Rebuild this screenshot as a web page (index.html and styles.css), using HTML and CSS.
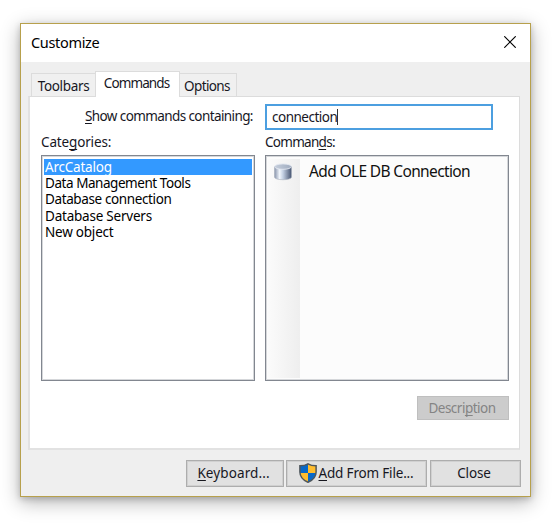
FILE: index.html
```html
<!DOCTYPE html>
<html lang="en">
<head>
<meta charset="utf-8">
<title>Customize</title>
<link rel="stylesheet" href="styles.css">
</head>
<body>
<main class="window">
  <header class="titlebar">
    <h1 class="title">Customize</h1>
    <svg class="close-icon" width="12" height="12" viewBox="0 0 12 12"><path d="M.3.3 11.7 11.7M11.7.3.3 11.7" stroke="#000" stroke-width="1.15"/></svg>
  </header>
  <nav class="tabs">
    <div class="tab tab-toolbars"><span>Toolbars</span></div>
    <div class="tab tab-commands active"><span>Commands</span></div>
    <div class="tab tab-options"><span>Options</span></div>
  </nav>
  <section class="panel">
    <div class="search">
      <label class="search-label"><u>S</u>how commands containing:</label>
      <div class="search-input"><span class="query">connection</span><i class="caret"></i></div>
    </div>
    <div class="columns">
      <div class="column categories">
        <div class="label">Cate<u>g</u>ories:</div>
        <ul class="list">
          <li class="selected"><span>ArcCatalog</span></li>
          <li><span class="management">Data Management Tools</span></li>
          <li><span class="connection">Database connection</span></li>
          <li><span class="servers">Database Servers</span></li>
          <li><span>New object</span></li>
        </ul>
      </div>
      <div class="column commands">
        <div class="label">Comman<u>d</u>s:</div>
        <div class="list command-list">
          <div class="gutter">
            <svg width="20" height="18" viewBox="0 0 20 18">
              <defs><linearGradient id="side"><stop offset="0" stop-color="#8793ab"/><stop offset=".3" stop-color="#f1f6fc"/><stop offset=".5" stop-color="#c3d0e3"/><stop offset="1" stop-color="#465470"/></linearGradient>
              <linearGradient id="lid"><stop offset="0" stop-color="#c5cedc"/><stop offset="1" stop-color="#a0acbf"/></linearGradient></defs>
              <path d="M1.500 3.600v10.500c0 3.500 17 3.500 17 0V3.600z" fill="url(#side)" stroke="#a6afbc" stroke-width=".6"/>
              <ellipse cx="10" cy="3.600" rx="8.400" ry="2.700" fill="url(#lid)" stroke="#e3e8f0" stroke-width=".9"/>
            </svg>
          </div>
          <div class="command">Add OLE DB Connection</div>
        </div>
      </div>
    </div>
    <button class="button description" disabled><span>Descri<u>p</u>tion</span></button>
  </section>
  <footer class="footer">
    <button class="button keyboard"><span><u>K</u>eyboard...</span></button>
    <button class="button add">
      <svg class="shield" width="18" height="20" viewBox="0 0 18 20">
        <defs><clipPath id="shape"><path d="M9 .8c2 1.300 4.800 2 8.100 2v6.200c0 5-3.300 8.200-8.100 10.300C4.200 17.200.900 14 .900 9V2.800c3.300 0 6.100-.7 8.100-2z"/></clipPath></defs>
        <g clip-path="url(#shape)"><path d="M0 0h9v10H0zM9 10h9v10H9z" fill="#0868c8"/><path d="M9 0h9v10H9zM0 10h9v10H0z" fill="#ffbd2e"/></g>
        <path d="M9 .8c2 1.300 4.800 2 8.100 2v6.200c0 5-3.300 8.200-8.100 10.300C4.200 17.200.900 14 .900 9V2.800c3.300 0 6.100-.7 8.100-2z" fill="none" stroke="#50575c" stroke-width="1.500"/>
      </svg><span><u>A</u>dd From File...</span>
    </button>
    <button class="button close"><span>Close</span></button>
  </footer>
</main>
</body>
</html>
```
FILE: styles.css
```css
* { box-sizing: border-box; }
body { margin: 0; width: 557px; height: 527px; padding: 23px 0 0 20px; overflow: hidden; background: #fff; color: #17171f; font: 13.5px/16px "Noto Sans", "Open Sans", sans-serif; }
u { text-decoration-thickness: 1px; text-underline-offset: 2px; text-decoration-skip-ink: none; }
span, .label, .command, .search-label { white-space: nowrap; }
.window { width: 511px; height: 474px; border: 1px solid #b7a04c; background: #efefef; box-shadow: 0 5px 18px rgba(0,0,0,.30), 0 2px 6px rgba(0,0,0,.18); }
.titlebar { height: 38px; padding: 0 14px 0 10px; background: #fff; display: flex; align-items: center; justify-content: space-between; }
.title { margin: -2px 0 0; color: #000; font-size: 14.5px; font-weight: 400; line-height: 20px; letter-spacing: -.33px; }
.close-icon { display: block; margin-top: -2px; }
.tabs { height: 34px; padding: 9px 0 0 10px; display: flex; align-items: flex-end; }
.tab { height: 23px; border: 1px solid #dcdcdc; border-bottom: 0; background: #f0f0f0; display: flex; align-items: center; justify-content: center; padding-top: 2px; }
.tab-toolbars { width: 64px; border-right: 0; letter-spacing: -.35px; }
.tab-commands { width: 85px; letter-spacing: -.9px; }
.tab-options { width: 57px; border-left: 0; padding-right: 2px; letter-spacing: -.6px; }
.tab.active { height: 26px; margin-bottom: -1px; padding: 0 2px 3px 0; background: #fff; position: relative; }
.panel { width: 492px; height: 354px; margin-left: 7px; padding: 7px 10px 0 11px; border: 1px solid #dcdcdc; border-left: 2px solid #e2e2e2; border-bottom: 2px solid #e2e2e2; background: #fff; }
.search { height: 26px; padding-left: 44px; display: flex; align-items: center; }
.search-label { width: 180px; margin-top: -2px; letter-spacing: -.6px; }
.search-input { width: 228px; height: 26px; padding: 0 5px; border: 2px solid #4c9fe0; display: flex; align-items: center; }
.query { letter-spacing: -.5px; }
.caret { width: 1px; height: 16px; background: #333; }
.columns { display: flex; gap: 10px; padding-top: 4px; }
.label { height: 21px; line-height: 16px; letter-spacing: -.15px; }
.categories { width: 214px; }
.commands { width: 244px; }
.commands .label { letter-spacing: -.72px; }
.list { height: 226px; margin: 0; padding: 3px 2px 2px; border: 1px solid #828790; box-shadow: inset 0 0 0 1px #d5d7da; list-style: none; background: #fff; }
.list li { height: 16.2px; padding-left: 1px; color: #000; letter-spacing: -.22px; }
.list .selected { background: #3399ff; color: #fff; }
.list .management { letter-spacing: -.45px; }
.list .connection { letter-spacing: -.38px; }
.list .servers { letter-spacing: -.22px; }
.command-list { display: flex; background: #fcfcfc; }
.gutter { width: 32px; padding: 4px 0 0 5px; background: linear-gradient(90deg, #fbfbfb, #eee); }
.gutter svg, .shield { display: block; flex: none; }
.command { padding: 2px 0 0 9px; font-size: 15.5px; line-height: 20px; letter-spacing: -.64px; color: #111; }
.button { margin: 0; padding: 0; border: 1px solid #adadad; box-shadow: inset 0 0 0 1px #d0d0d0; background: #e1e1e1; color: #17171f; font: inherit; display: flex; align-items: center; justify-content: center; }
.description { width: 92px; height: 24px; margin: 15px 0 0 auto; padding-right: 2px; background: #ccc; border-color: #bfbfbf; color: #848484; box-shadow: none; letter-spacing: -.5px; }
.footer { display: flex; padding: 10px 0 0 165px; }
.footer .button { height: 27px; padding-bottom: 1px; }
.footer .keyboard { width: 98px; margin-right: 2px; padding-right: 3px; letter-spacing: .1px; }
.footer .add { width: 141px; margin-right: 3px; padding-right: 1px; letter-spacing: -.18px; }
.footer .close { width: 91px; padding-right: 3px; letter-spacing: -.15px; }
.shield { margin-right: 2px; }
```
